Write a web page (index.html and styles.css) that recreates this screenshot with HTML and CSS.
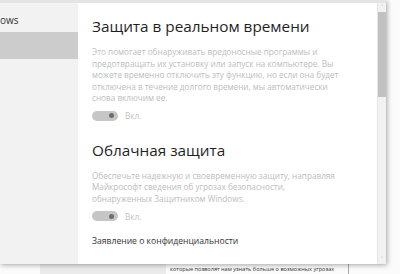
FILE: index.html
```html
<!DOCTYPE html>
<html lang="ru">
<head>
    <meta charset="UTF-8">
    <title>Защитник Windows - Параметры</title>
    <link rel="stylesheet" href="styles.css">
</head>
<body>

    <!-- Settings window -->
    <div class="window">
        <div class="top-strip"></div>
        <div class="window-body">

            <!-- Left navigation -->
            <div class="nav">
                <div class="nav-item">ows</div>
                <div class="nav-item selected"></div>
            </div>

            <!-- Settings content -->
            <div class="content">
                <h2>Защита в реальном времени</h2>
                <p class="desc">Это помогает обнаруживать вредоносные программы и предотвращать их установку или запуск на компьютере. Вы можете временно отключить эту функцию, но если она будет отключена в течение долгого времени, мы автоматически снова включим ее.</p>
                <div class="toggle-row">
                    <span class="toggle"><span class="knob"></span></span>
                    <span class="toggle-label">Вкл.</span>
                </div>

                <h2>Облачная защита</h2>
                <p class="desc">Обеспечьте надежную и своевременную защиту, направляя Майкрософт сведения об угрозах безопасности, обнаруженных Защитником Windows.</p>
                <div class="toggle-row">
                    <span class="toggle"><span class="knob"></span></span>
                    <span class="toggle-label">Вкл.</span>
                </div>

                <a class="link">Заявление о конфиденциальности</a>
            </div>

            <!-- Scrollbar -->
            <div class="scrollbar">
                <div class="arrow">&#708;</div>
                <div class="thumb"></div>
                <div class="track"></div>
                <div class="arrow">&#709;</div>
            </div>
        </div>
    </div>

    <!-- Page behind the window -->
    <div class="behind">
        <div class="behind-gap"></div>
        <div class="behind-gray"></div>
        <div class="behind-text">которые позволят нам узнать больше о возможных угрозах</div>
        <div class="behind-line"></div>
    </div>

</body>
</html>
```

FILE: styles.css
```css
/* General Reset */
body, html {
    margin: 0;
    padding: 0;
    font-family: "Open Sans", "Noto Sans", sans-serif;
}

body {
    width: 400px;
    height: 274px;
    overflow: hidden;
    background-color: #fbfbfb;
}

/* Window */
.window {
    width: 386px;
    height: 264px;
    background-color: #ffffff;
    box-shadow: 1px 1px 5px rgba(0, 0, 0, 0.35);
    position: relative;
    z-index: 1;
}

.top-strip {
    height: 3px;
    background-color: #e4e4e4;
}

.window-body {
    display: flex;
    height: 261px;
}

/* Navigation */
.nav {
    width: 78px;
    background-color: #f2f2f2;
    padding-top: 8px;
}

.nav-item {
    height: 21px;
    font-size: 10px;
    line-height: 18px;
    color: #333;
}

.nav-item.selected {
    height: 27px;
    background-color: #cccccc;
}

/* Content */
.content {
    flex: 1;
    padding: 12px 0 0 14px;
}

.content h2 {
    margin: 0;
    font-size: 15.3px;
    font-weight: 400;
    color: #1f1f1f;
    line-height: 22px;
}

.desc {
    margin: 9px 0 0 0;
    width: 252px;
    font-size: 8.2px;
    line-height: 11.5px;
    color: #bdbdbd;
}

.toggle-row {
    display: flex;
    align-items: center;
    margin-top: 6px;
    height: 12px;
}

.toggle {
    width: 26px;
    height: 10px;
    border-radius: 5px;
    background-color: #c6c6c6;
    position: relative;
}

.knob {
    position: absolute;
    right: 4px;
    top: 2.5px;
    width: 5px;
    height: 5px;
    border-radius: 50%;
    background-color: #6e6e6e;
}

.toggle-label {
    margin-left: 7px;
    font-size: 8.2px;
    color: #c3c3c3;
}

.toggle-row + h2 {
    margin-top: 17px;
}

.link {
    display: block;
    margin-top: 13px;
    font-size: 8.6px;
    color: #333;
}

/* Scrollbar */
.scrollbar {
    width: 8px;
    background-color: #f2f2f2;
    display: flex;
    flex-direction: column;
    border-left: 1px solid #e6e6e6;
}

.scrollbar .arrow {
    height: 9px;
    font-size: 6px;
    line-height: 9px;
    text-align: center;
    color: #999;
}

.thumb {
    height: 85px;
    background-color: #c1c1c1;
}

.track {
    flex: 1;
}

/* Page behind the window */
.behind {
    display: flex;
    height: 10px;
    background-color: #fbfbfb;
}

.behind-gap {
    width: 40px;
}

.behind-gray {
    width: 126px;
    background-color: #ebebeb;
}

.behind-text {
    width: 178px;
    padding-left: 4px;
    font-size: 5.6px;
    line-height: 10px;
    color: #333;
    white-space: nowrap;
}

.behind-line {
    width: 1px;
    background-color: #aaa;
}
```
